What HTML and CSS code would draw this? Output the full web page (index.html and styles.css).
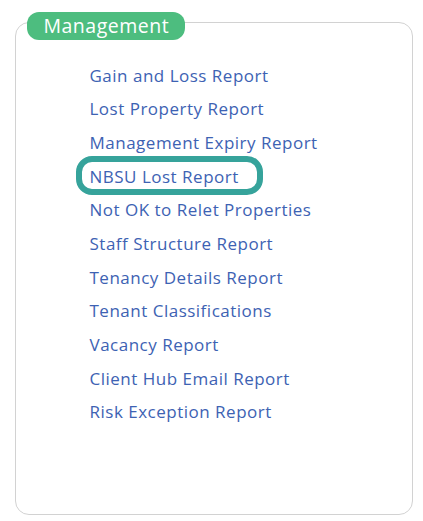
FILE: index.html
```html
<!DOCTYPE html>
<html>
<head>
<meta charset="utf-8">
<link rel="stylesheet" href="styles.css">
</head>
<body>
<section class="panel">
  <h2 class="panel-title">Management</h2>
  <ul class="report-list">
    <li><a class="report-link">Gain and Loss Report</a></li>
    <li><a class="report-link">Lost Property Report</a></li>
    <li><a class="report-link">Management Expiry Report</a></li>
    <li><a class="report-link is-highlighted">NBSU Lost Report</a></li>
    <li><a class="report-link">Not OK to Relet Properties</a></li>
    <li><a class="report-link">Staff Structure Report</a></li>
    <li><a class="report-link">Tenancy Details Report</a></li>
    <li><a class="report-link">Tenant Classifications</a></li>
    <li><a class="report-link">Vacancy Report</a></li>
    <li><a class="report-link">Client Hub Email Report</a></li>
    <li><a class="report-link">Risk Exception Report</a></li>
  </ul>
</section>
</body>
</html>
```

FILE: styles.css
```css
html, body {
  margin: 0;
  padding: 0;
  background: #ffffff;
}

body {
  padding: 22px 0 0 15px;
  font-family: "Open Sans", "DejaVu Sans", sans-serif;
}

.panel {
  position: relative;
  box-sizing: border-box;
  width: 398px;
  height: 493px;
  border: 1.5px solid #d2d2d2;
  border-radius: 14px;
}

.panel-title {
  position: absolute;
  left: 10.5px;
  top: -11.5px;
  margin: 0;
  padding: 0 16px 0 17px;
  height: 28px;
  line-height: 27px;
  background: #4dbd7f;
  color: #ffffff;
  font-size: 19.5px;
  font-weight: normal;
  letter-spacing: 0.5px;
  border-radius: 12px;
}

.report-list {
  list-style: none;
  margin: 0;
  padding: 35.5px 0 0 73.5px;
}

.report-list li {
  height: 33.7px;
  line-height: 33.7px;
}

.report-link {
  position: relative;
  color: #3d62b3;
  font-size: 17px;
  letter-spacing: 0.5px;
  text-decoration: none;
}

.report-link.is-highlighted::before {
  content: "";
  position: absolute;
  left: -14px;
  right: -24px;
  top: -9px;
  bottom: -7px;
  border: 6.5px solid #36a39b;
  border-radius: 16px;
}
```
